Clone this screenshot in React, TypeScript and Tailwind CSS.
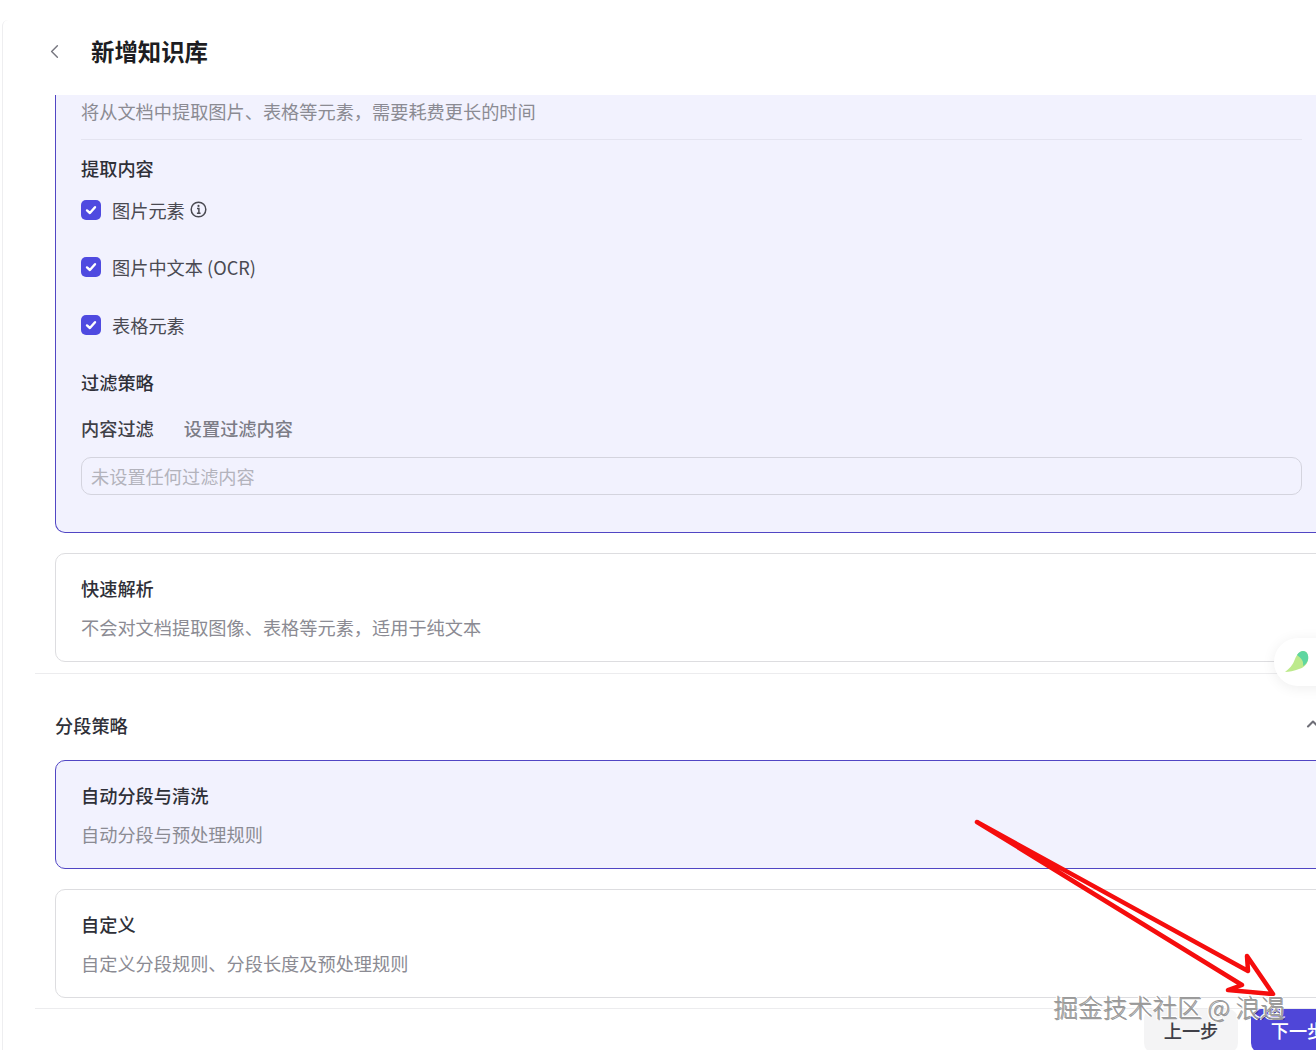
import React from 'react';
import { ChevronLeft, ChevronUp } from 'lucide-react';

const font = "font-['Noto_Sans_CJK_SC','Noto_Sans',sans-serif]";

const extractItems = [
    { label: '图片元素', info: true, className: 'mt-[12px]' },
    { label: '图片中文本 (OCR)', info: false, className: 'mt-[27px]' },
    { label: '表格元素', info: false, className: 'mt-[28px]' },
];

const OptionCard: React.FC<{ title: string; desc: string; active?: boolean; className?: string }> = ({ title, desc, active, className }) => (
    <div className={`w-[1273px] h-[109px] rounded-[10px] border px-[25px] pt-[19px] ${active ? 'border-[#5146c4] bg-[#f2f2fe]' : 'border-[#dddde0] bg-white'} ${className ?? ''}`}>
        <div className="text-[18.2px] leading-[30px] font-medium text-[#2f3038]">{title}</div>
        <div className="mt-[9px] text-[18.2px] leading-[30px] text-[#8b8b93]">{desc}</div>
    </div>
);

export default function App() {
    return (
        <div className={`relative w-[1316px] h-[1050px] overflow-hidden bg-white ${font}`}>
            <div className="ml-[2px] mt-[20px] h-[1030px] w-[1400px] rounded-tl-md border-l border-[#eeeef0] flex flex-col overflow-hidden">
                {/* header */}
                <div className="h-[75px] shrink-0 flex items-center pl-[41px] pb-[14px]">
                    <ChevronLeft className="mt-[2px] -ml-[1px] w-[23px] h-[23px] text-[#777780]" strokeWidth={1.5} />
                    <h1 className="ml-[25px] text-[23.4px] leading-[32px] font-bold text-[#1d1d22]">新增知识库</h1>
                </div>

                {/* body */}
                <div className="flex-1 overflow-hidden">
                    <div className="ml-[52px]">
                        <div className="w-[1273px] h-[438px] rounded-b-[10px] border-x border-b border-[#5146c4] bg-[#f2f2fe] px-[25px]">
                            <div className="h-[45px] border-b border-[#e4e4f0] text-[18.2px] leading-[32px] text-[#8b8b93]">
                                将从文档中提取图片、表格等元素，需要耗费更长的时间
                            </div>
                            <div className="mt-[13px] text-[18.2px] leading-[30px] font-medium text-[#2f3038]">提取内容</div>
                            {extractItems.map(item => (
                                <div key={item.label} className={`h-[30px] flex items-center ${item.className}`}>
                                    <span className="w-[20px] h-[20px] rounded-[5px] bg-[#4f4ae0] flex items-center justify-center">
                                        <svg width="14" height="14" viewBox="0 0 14 14" fill="none">
                                            <path d="M3 7.4 L5.9 10 L11 4.2" stroke="#fff" strokeWidth="2.4" strokeLinecap="round" strokeLinejoin="round" />
                                        </svg>
                                    </span>
                                    <span className="ml-[11px] text-[18.2px] leading-[30px] text-[#4a4a52]">{item.label}</span>
                                    {item.info && (
                                        <svg className="ml-[5px] -mt-[2px]" width="17" height="17" viewBox="0 0 17 17" fill="none">
                                            <circle cx="8.5" cy="8.5" r="7.3" stroke="#4a4a52" strokeWidth="1.5" />
                                            <path d="M7 7.4 H8.9 V12.2 M6.9 12.2 H10.6" stroke="#4a4a52" strokeWidth="1.5" />
                                            <circle cx="8.5" cy="4.9" r="1.1" fill="#4a4a52" />
                                        </svg>
                                    )}
                                </div>
                            ))}
                            <div className="mt-[27px] text-[18.2px] leading-[30px] font-medium text-[#2f3038]">过滤策略</div>
                            <div className="mt-[16px] flex text-[18.2px] leading-[30px]">
                                <span className="font-medium text-[#3f3f47]">内容过滤</span>
                                <span className="ml-[30px] font-medium text-[#7c7c86]">设置过滤内容</span>
                            </div>
                            <div className="mt-[14px] w-[1221px] h-[38px] rounded-[10px] border border-[#d4d4de] px-[9px] text-[18.2px] leading-[36px] text-[#b3b3bc]">
                                未设置任何过滤内容
                            </div>
                        </div>

                        <OptionCard className="mt-[20px]" title="快速解析" desc="不会对文档提取图像、表格等元素，适用于纯文本" />
                    </div>

                    <div className="ml-[32px] mt-[11px] border-t border-[#ececee]" />

                    <div className="ml-[52px] w-[1273px] h-[86px] flex items-start justify-between pt-[36px] pr-[5px]">
                        <span className="text-[18.2px] leading-[30px] font-medium text-[#2f3038]">分段策略</span>
                        <ChevronUp className="mt-[4px] w-[20px] h-[20px] text-[#6f6f78]" strokeWidth={2.5} />
                    </div>

                    <div className="ml-[52px]">
                        <OptionCard active title="自动分段与清洗" desc="自动分段与预处理规则" />
                        <OptionCard className="mt-[20px]" title="自定义" desc="自定义分段规则、分段长度及预处理规则" />
                    </div>

                    <div className="ml-[32px] mt-[10px] border-t border-[#ececee]" />

                    {/* footer */}
                    <div className="flex gap-[13px] pl-[1141px]">
                        <button className="w-[94px] h-[44px] shrink-0 rounded-[10px] bg-[#f4f4f5] text-[18.2px] font-medium text-[#3f3f47]">上一步</button>
                        <button className="w-[94px] h-[44px] shrink-0 rounded-[10px] bg-[#4f46d8] text-[18.2px] font-medium text-white">下一步</button>
                    </div>
                </div>
            </div>

            {/* floating assistant */}
            <div className="absolute left-[1274px] top-[638px] w-[60px] h-[48px] rounded-l-full bg-white shadow-[0_2px_14px_rgba(0,0,0,0.07)] flex items-center pl-[10px]">
                <svg width="26" height="24" viewBox="0 0 26 24">
                    <path d="M1 22 C5 19 9 15 11 9 C13 4 16 1 19 1 C23 1 25 5 24 10 C23 15 19 18 15 19 C10 21 5 22 1 22Z" fill="#bdea8c" />
                    <path d="M13 5 C15 2 17 1 19 1 C23 1 25 5 24 10 C23 13 21 15 19 16 C20 11 17 8 13 5Z" fill="#5fd6a0" />
                </svg>
            </div>

            {/* annotation arrow */}
            <svg className="absolute left-0 top-0 pointer-events-none" width="1316" height="1050" viewBox="0 0 1316 1050">
                <path d="M977 822 L1248 971 L1247 956 L1273 994 L1228 990 L1242 985 Z" fill="none" stroke="#f50d0d" strokeWidth="4.5" strokeLinejoin="round" />
            </svg>

            {/* watermark */}
            <div className="absolute left-[1053px] top-[988px] whitespace-nowrap text-[24.8px] font-light leading-[36px] text-[#9a9a9a] [text-shadow:1px_1px_0_rgba(0,0,0,0.4),-1px_-1px_0_#fff,1px_-1px_0_#fff,-1px_1px_0_#fff]">
                掘金技术社区 @ 浪遏
            </div>
        </div>
    );
}
